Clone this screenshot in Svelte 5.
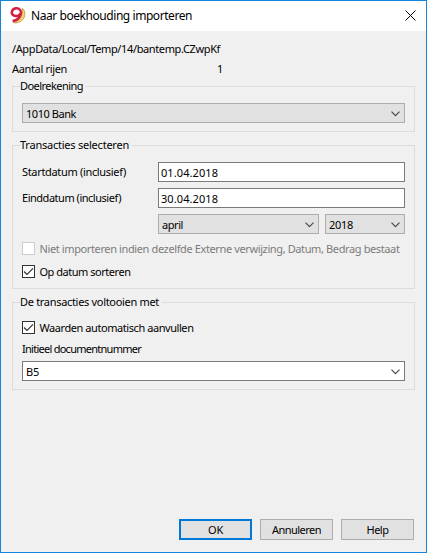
<script>
  // Spreads the letter spacing so a label takes up the given width in pixels.
  function fit(node, width) {
    const natural = node.getBoundingClientRect().width;
    const count = node.textContent.length;
    node.style.letterSpacing = `${(width - natural) / count}px`;
  }
</script>

{#snippet label(text, width)}
  <span class="text" use:fit={width}>{text}</span>
{/snippet}

{#snippet chevron()}
  <svg class="chevron" width="9" height="6" viewBox="0 0 9 6"><path d="M.5 .7 4.5 4.7 8.5 .7" fill="none" stroke="#4a4a4a" stroke-width="1.2" /></svg>
{/snippet}

{#snippet checkbox(checked, disabled)}
  <span class="box" class:disabled>
    {#if checked}
      <svg width="11" height="11" viewBox="0 0 11 11"><path d="M1 5.5 4 8.5 10 2.3" fill="none" stroke="#333" stroke-width="1.2" /></svg>
    {/if}
  </span>
{/snippet}

<div class="window">
  <header>
    <svg class="logo" width="16" height="17" viewBox="0 0 16 17">
      <path d="M12.4 1.3C15.6 4 15.8 9 12.8 12.6 10.4 15.4 7 16.6 3 15.5 9 14.5 12.6 9 12.4 1.3Z" fill="#f3d56b" stroke="#b8964a" stroke-width=".8" />
      <path d="M10.4 6.4C9.5 8.4 7.6 9.3 5.3 9 2.7 8.6 1.4 7 1.9 4.8 2.4 2.4 4.6 1.1 7 1.3 10 1.6 11.4 3.8 10.8 7 10 11 7.2 13.4 2.6 14" fill="none" stroke="#d51f42" stroke-width="2.5" />
    </svg>
    <h1>{@render label("Naar boekhouding importeren", 161)}</h1>
    <svg class="close" width="11" height="11" viewBox="0 0 11 11"><path d="M.5 .5 10.5 10.5M10.5 .5 .5 10.5" stroke="#000" stroke-width="1" /></svg>
  </header>

  <main>
    <div class="line path">{@render label("/AppData/Local/Temp/14/bantemp.CZwpKf", 208)}</div>
    <div class="line count">
      <span class="name">{@render label("Aantal rijen", 55)}</span>
      {@render label("1", 7)}
    </div>

    <section class="account">
      <h2>{@render label("Doelrekening", 63)}</h2>
      <div class="field grey">{@render label("1010 Bank", 50)}{@render chevron()}</div>
    </section>

    <section class="select">
      <h2>{@render label("Transacties selecteren", 109)}</h2>
      <div class="row">
        <span class="name">{@render label("Startdatum (inclusief)", 104)}</span>
        <div class="field date">{@render label("01.04.2018", 57)}</div>
      </div>
      <div class="row">
        <span class="name">{@render label("Einddatum (inclusief)", 99)}</span>
        <div class="field date">{@render label("30.04.2018", 57)}</div>
      </div>
      <div class="row">
        <span class="name"></span>
        <div class="field grey month">{@render label("april", 21)}{@render chevron()}</div>
        <div class="field grey year">{@render label("2018", 24)}{@render chevron()}</div>
      </div>
      <div class="check muted">{@render checkbox(false, true)}{@render label("Niet importeren indien dezelfde Externe verwijzing, Datum, Bedrag bestaat", 360)}</div>
      <div class="check sort">{@render checkbox(true, false)}{@render label("Op datum sorteren", 91)}</div>
    </section>

    <section class="complete">
      <h2>{@render label("De transacties voltooien met", 139)}</h2>
      <div class="check">{@render checkbox(true, false)}{@render label("Waarden automatisch aanvullen", 154)}</div>
      <div class="line doc">{@render label("Initieel documentnummer", 119)}</div>
      <div class="field">{@render label("B5", 13)}{@render chevron()}</div>
    </section>

    <footer>
      <button class="primary">{@render label("OK", 15)}</button>
      <button>{@render label("Annuleren", 49)}</button>
      <button>{@render label("Help", 22)}</button>
    </footer>
  </main>
</div>

<style>
  :global(body) { background: #fff; }
  .window {
    box-sizing: border-box;
    width: 427px;
    height: 553px;
    border: 1px solid #1883d7;
    background: #f0f0f0;
    color: #000;
    font: 11px/14px "Noto Sans", "Open Sans", sans-serif;
    display: flex;
    flex-direction: column;
  }
  .text { white-space: pre; flex: none; }
  header {
    display: flex;
    align-items: center;
    height: 30px;
    background: #fff;
    padding: 0 10px 0 9px;
    box-sizing: border-box;
  }
  .logo { margin-right: 5px; margin-top: -1px; }
  h1 { font: 12px/16px "Noto Sans", sans-serif; margin: 0; flex: 1; }
  .close { margin-top: -1px; }
  main { display: flex; flex-direction: column; padding: 0 11px; flex: 1; }
  .line { display: flex; height: 14px; }
  .path { margin-top: 11px; }
  .count { margin-top: 6px; }
  .count .name { width: 205px; }
  section {
    box-sizing: border-box;
    border: 1px solid #dcdcdc;
    padding: 0 9px;
    width: 403px;
    display: flex;
    flex-direction: column;
    align-items: stretch;
  }
  h2 {
    font: inherit;
    margin: -8px 0 0 -2px;
    padding: 0 3px 0 0;
    height: 14px;
    background: #f0f0f0;
    align-self: flex-start;
    display: flex;
  }
  .account { margin-top: 10px; height: 46px; }
  .select { margin-top: 13px; height: 144px; }
  .complete { margin-top: 13px; height: 88px; }
  .field {
    box-sizing: border-box;
    height: 20px;
    border: 1px solid #7a7a7a;
    background: #fff;
    display: flex;
    align-items: center;
    justify-content: space-between;
    padding: 1px 4px 0 3px;
  }
  .grey { background: #e1e1e1; border-color: #adadad; }
  .account .field { margin-top: 10px; }
  .row { display: flex; align-items: center; margin-bottom: 6px; }
  h2 + .row { margin-top: 10px; }
  .row .name { width: 136px; display: flex; }
  .date { flex: 1; padding-left: 2px; }
  .month { width: 161px; margin-right: 6px; }
  .year { width: 80px; }
  .check { display: flex; align-items: center; height: 13px; }
  .muted { color: #7c7c7c; margin-top: 2px; }
  .sort { margin-top: 10px; }
  .box {
    box-sizing: border-box;
    width: 13px;
    height: 13px;
    flex: none;
    margin-right: 4.5px;
    border: 1px solid #333;
    background: #fff;
    display: flex;
  }
  .disabled { border-color: #ccc; }
  .complete .check { margin-top: 12px; }
  .doc { margin-top: 8px; }
  .complete .field { margin-top: 5px; }
  .chevron { flex: none; }
  footer { display: flex; justify-content: flex-end; gap: 8px; margin: auto 1px 12px 0; }
  button {
    box-sizing: border-box;
    width: 73px;
    height: 21px;
    padding: 0;
    border: 1px solid #adadad;
    background: #e1e1e1;
    color: inherit;
    font: inherit;
    display: flex;
    align-items: center;
    justify-content: center;
  }
  .primary { border: 2px solid #0078d7; }
</style>
